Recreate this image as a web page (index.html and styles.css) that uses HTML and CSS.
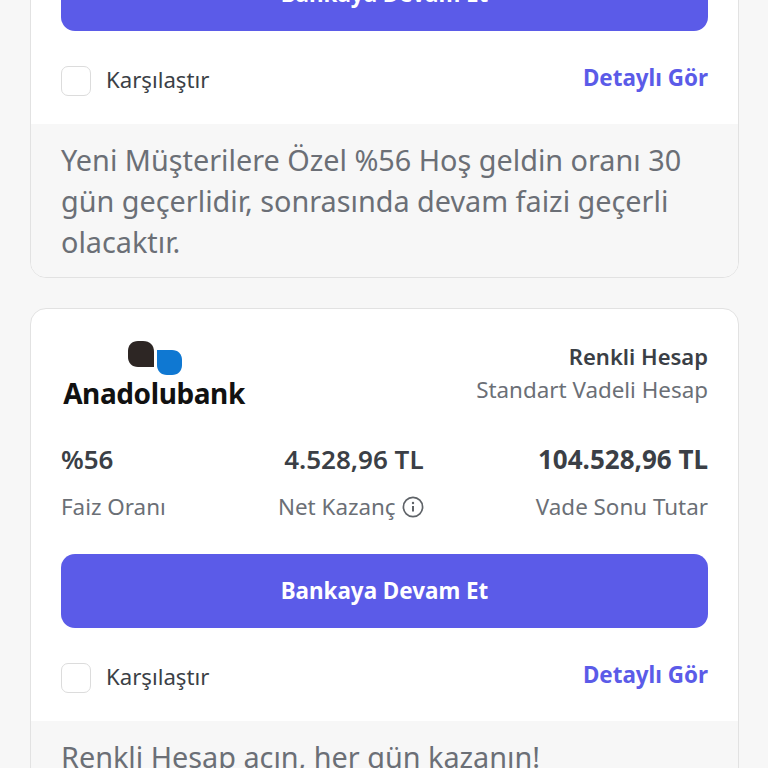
FILE: index.html
```html
<!DOCTYPE html>
<html lang="tr">
<head>
    <meta charset="UTF-8">
    <meta name="viewport" content="width=device-width, initial-scale=1.0">
    <title>Vadeli Hesap Karşılaştırma</title>
    <link rel="stylesheet" href="styles.css">
</head>
<body>
    <div class="offer-list">
        <!-- first card is scrolled past the top -->
        <div class="offer-card">
            <a class="bank-btn" href="#">Bankaya Devam Et</a>
            <div class="compare-row">
                <label class="compare-label"><span class="check-box"></span>Karşılaştır</label>
                <a class="detail-link" href="#">Detaylı Gör</a>
            </div>
            <div class="offer-note">Yeni Müşterilere Özel %56 Hoş geldin oranı 30 gün geçerlidir, sonrasında devam faizi geçerli olacaktır.</div>
        </div>

        <div class="offer-card">
            <div class="offer-head">
                <div class="bank-logo">
                    <svg class="logo-mark" width="56" height="36" viewBox="0 0 56 36">
                        <path d="M0 10C0 4 4 0 10 0H15C22 0 26 4 26 11V26H10C4 26 0 22 0 16Z" fill="#2d2624"/>
                        <path d="M29 9H44C50 9 54 13 54 19V24C54 30 50 34 44 34H39C33 34 29 30 29 24Z" fill="#0f78d2"/>
                    </svg>
                    <span class="logo-name">Anadolubank</span>
                </div>
                <div class="product">
                    <div class="product-name">Renkli Hesap</div>
                    <div class="product-type">Standart Vadeli Hesap</div>
                </div>
            </div>
            <div class="stats">
                <div class="stat stat-left">
                    <div class="stat-value">%56</div>
                    <div class="stat-label">Faiz Oranı</div>
                </div>
                <div class="stat stat-mid">
                    <div class="stat-value">4.528,96 TL</div>
                    <div class="stat-label">Net Kazanç
                        <svg class="info-icon" width="22" height="22" viewBox="0 0 22 22">
                            <circle cx="11" cy="11" r="9.6" fill="none" stroke="#5f6368" stroke-width="1.7"/>
                            <circle cx="11" cy="7" r="1.2" fill="#5f6368"/>
                            <path d="M11 10V15.5" stroke="#5f6368" stroke-width="2" fill="none"/>
                        </svg>
                    </div>
                </div>
                <div class="stat stat-right">
                    <div class="stat-value stat-strong">104.528,96 TL</div>
                    <div class="stat-label">Vade Sonu Tutar</div>
                </div>
            </div>
            <a class="bank-btn" href="#">Bankaya Devam Et</a>
            <div class="compare-row">
                <label class="compare-label"><span class="check-box"></span>Karşılaştır</label>
                <a class="detail-link" href="#">Detaylı Gör</a>
            </div>
            <div class="offer-note">Renkli Hesap açın, her gün kazanın!</div>
        </div>
    </div>
</body>
</html>
```

FILE: styles.css
```css
html, body {
    height: 768px;
    overflow: hidden;
}
body {
    margin: 0;
    background-color: #f7f7f7;
    font-family: "Noto Sans", Arial, sans-serif;
    font-size: 22.4px;
    color: #3b3f46;
}
.offer-list {
    display: flex;
    flex-direction: column;
    gap: 30px;
    margin: -44px 29px 0 30px;
}
.offer-card {
    background-color: #fff;
    border: 1px solid #e2e2e2;
    border-radius: 16px;
    overflow: hidden;
}
.bank-btn {
    display: block;
    height: 74px;
    line-height: 74px;
    margin: 0 30px;
    background-color: #5b5be8;
    border-radius: 14px;
    color: #fff;
    font-weight: 700;
    text-align: center;
    text-decoration: none;
}
.compare-row {
    display: flex;
    align-items: center;
    justify-content: space-between;
    height: 93px;
    padding: 0 30px;
}
.compare-label {
    display: flex;
    align-items: center;
    gap: 15px;
    margin-top: 4px;
    color: #3b3f46;
    font-size: 22.2px;
}
.check-box {
    width: 28px;
    height: 28px;
    margin-top: 3px;
    border: 1px solid #dcdcdc;
    border-radius: 7px;
    background-color: #fff;
}
.detail-link {
    margin-top: 0;
    color: #5b5be8;
    font-weight: 700;
    text-decoration: none;
}
.offer-note {
    padding: 15px 30px;
    background-color: #f7f7f7;
    color: #6b6f76;
    font-size: 28.8px;
    line-height: 41px;
}
.offer-head {
    display: flex;
    justify-content: space-between;
    padding: 32px 30px 0;
}
.bank-logo {
    display: flex;
    flex-direction: column;
    align-items: center;
    width: 186px;
}
.logo-mark {
    display: block;
    margin-left: 4px;
}
.logo-name {
    color: #111;
    font-size: 28px;
    font-weight: 700;
    line-height: 32px;
    letter-spacing: -0.4px;
}
.product {
    margin-top: -4px;
    text-align: right;
    line-height: 34px;
}
.product-name {
    margin-top: 2px;
    font-size: 22px;
    font-weight: 600;
}
.product-type {
    color: #6b6f76;
}
.stats {
    display: flex;
    justify-content: space-between;
    padding: 0 30px;
    margin-top: 33px;
    margin-bottom: 30px;
}
.stat-mid {
    text-align: right;
}
.stat-right {
    text-align: right;
}
.stat-value {
    font-size: 26px;
    font-weight: 600;
    line-height: 34px;
}
.stat-strong {
    font-weight: 700;
}
.stat-label {
    display: flex;
    align-items: center;
    gap: 6px;
    margin-top: 14px;
    color: #6b6f76;
    line-height: 34px;
}
.info-icon {
    display: block;
}
```
